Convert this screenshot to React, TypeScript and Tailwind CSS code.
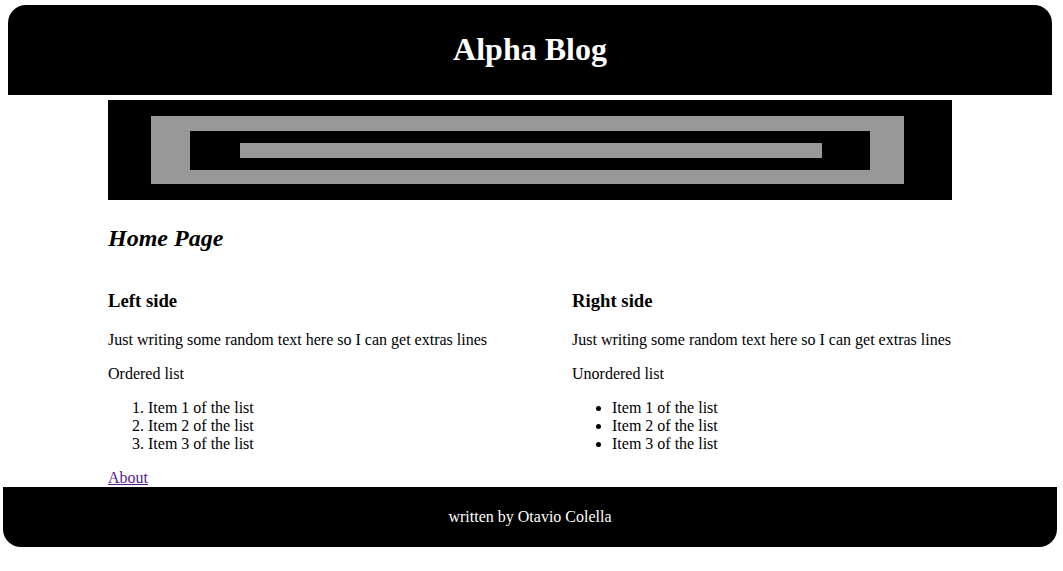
import React from "react";

export default function App() {
  const serif = { fontFamily: '"Liberation Serif", "Times New Roman", serif' };
  return (
    <div className="bg-white text-black min-h-[571px]" style={serif}>
      <header className="mt-[5px] ml-[8px] mr-[11px] h-[90px] bg-black rounded-t-[18px] pt-[26px]">
        <h1 className="text-white text-[32px] leading-[36px] font-bold text-center">Alpha Blog</h1>
      </header>

      <div className="ml-[108px] w-[844px]">
        <div className="mt-[5px] h-[100px] bg-black">
          <svg width="844" height="100" viewBox="0 0 844 100" className="block">
            <rect x="0" y="0" width="844" height="100" fill="#000" />
            <rect x="43" y="16" width="753" height="68" fill="#989898" />
            <rect x="82" y="31" width="680" height="39" fill="#000" />
            <rect x="132" y="43" width="582" height="15" fill="#989898" />
          </svg>
        </div>

        <h2 className="mt-[24px] text-[24px] leading-[28px] font-bold italic">Home Page</h2>

        <div className="flex mt-[38px]">
          <div className="w-[464px]">
            <h3 className="text-[18.72px] leading-[22px] font-bold">Left side</h3>
            <p className="mt-[19px] text-[16px] leading-[18px]">
              Just writing some random text here so I can get extras lines
            </p>
            <p className="mt-[16px] text-[16px] leading-[18px]">Ordered list</p>
            <ol className="mt-[16px] list-decimal pl-[40px] text-[16px] leading-[18px]">
              <li>Item 1 of the list</li>
              <li>Item 2 of the list</li>
              <li>Item 3 of the list</li>
            </ol>
          </div>
          <div className="flex-1">
            <h3 className="text-[18.72px] leading-[22px] font-bold">Right side</h3>
            <p className="mt-[19px] text-[16px] leading-[18px]">
              Just writing some random text here so I can get extras lines
            </p>
            <p className="mt-[16px] text-[16px] leading-[18px]">Unordered list</p>
            <ul className="mt-[16px] list-disc pl-[40px] text-[16px] leading-[18px]">
              <li>Item 1 of the list</li>
              <li>Item 2 of the list</li>
              <li>Item 3 of the list</li>
            </ul>
          </div>
        </div>

        <div className="mt-[16px] text-[16px] leading-[18px]">
          <a href="#about" className="text-[#551a8b] underline">About</a>
        </div>
      </div>

      <footer className="ml-[3px] mr-[6px] h-[60px] bg-black rounded-b-[18px] flex items-center justify-center">
        <span className="text-white text-[16px] leading-[18px]">written by Otavio Colella</span>
      </footer>
    </div>
  );
}
